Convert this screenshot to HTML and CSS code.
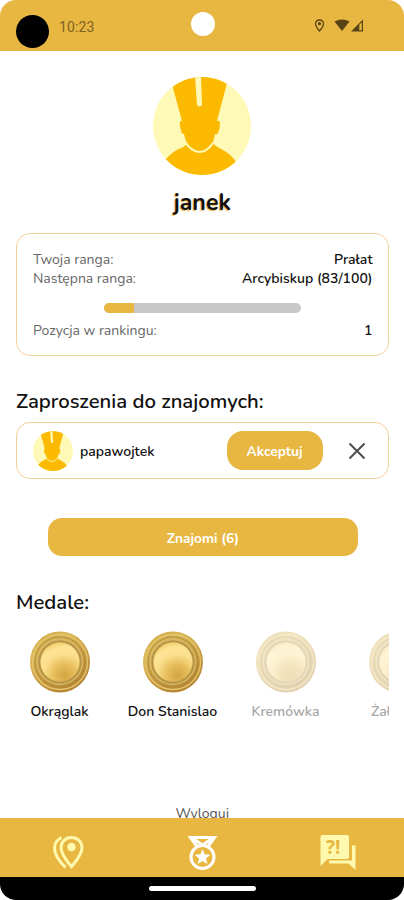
FILE: index.html
```html
<!DOCTYPE html>
<html lang="pl">
<head>
<meta charset="utf-8">
<title>Profil</title>
<link rel="stylesheet" href="styles.css">
</head>
<body>
<svg width="0" height="0" class="defs" aria-hidden="true">
  <defs>
    <clipPath id="round"><circle cx="49" cy="49" r="49"/></clipPath>
    <linearGradient id="rim" x1="0" y1="0" x2=".6" y2="1">
      <stop offset="0" stop-color="#c79d38"/><stop offset=".3" stop-color="#dcb958"/><stop offset=".6" stop-color="#cda143"/><stop offset="1" stop-color="#b48430"/>
    </linearGradient>
    <radialGradient id="face" cx=".62" cy=".84" r=".9">
      <stop offset="0" stop-color="#d3a442"/><stop offset=".3" stop-color="#e6bd5a"/><stop offset=".6" stop-color="#fbdf8c"/><stop offset=".8" stop-color="#fde495"/><stop offset="1" stop-color="#f0c75c"/>
    </radialGradient>
    <symbol id="avatar" viewBox="0 0 98 98">
      <g clip-path="url(#round)">
        <rect width="98" height="98" fill="#fff9b8"/>
        <path fill="#fbba00" d="M18 0H75L73 10L64 44Q67 43 67 46Q67 52 65 56Q64 58 62 57Q61 63 59.500 66Q62 69 68 72Q77 76 84 86L98 98H0L13 82Q20 74 28 71Q33 69 34 66Q32 62 31 57Q28 57 28 53Q26 47 27 45Q28 43 29 44L20 11Z"/>
        <path fill="#fff9b8" d="M42 0H48L49 28Q46 31 44 28Z"/>
        <path fill="none" stroke="#fff9b8" stroke-width="2.2" d="M33 66Q38 74 46 75Q54 75 60 66"/>
      </g>
    </symbol>
    <symbol id="medal" viewBox="0 0 60 62">
      <ellipse cx="30" cy="31" rx="30" ry="30.500" fill="url(#rim)"/>
      <circle cx="30" cy="31" r="27.500" fill="none" stroke="#e3c571" stroke-width="1.300"/>
      <circle cx="30" cy="31" r="25" fill="none" stroke="#b38a38" stroke-width="1"/>
      <circle cx="30" cy="31" r="22.500" fill="#c49f4b" stroke="#d6b966" stroke-width="1.300"/>
      <circle cx="30" cy="31" r="20.700" fill="none" stroke="#a98640" stroke-width="1.200" stroke-dasharray="1 1"/>
      <circle cx="30" cy="31" r="19.500" fill="url(#face)"/>
    </symbol>
  </defs>
</svg>
<div class="phone">
  <header class="status">
    <span class="recorder"></span>
    <span class="clock">10:23</span>
    <span class="camera"></span>
    <svg class="status-icons" width="50" height="16" viewBox="0 0 50 16">
      <path d="M5.500 2C3.200 2 1.500 3.600 1.500 5.700C1.500 8.300 5.500 13 5.500 13S9.500 8.300 9.500 5.700C9.500 3.600 7.800 2 5.500 2Z" fill="none" stroke="#584316" stroke-width="1.300"/>
      <circle cx="5.500" cy="5.700" r="1.600" fill="#584316"/>
      <path d="M20.500 3.500Q28-.500 35.500 3.500L28 13Z" fill="#584316"/>
      <path d="M37 13.500L49 1.500V13.500Z" fill="#584316"/><path d="M45.300 6.800L47.800 4.300V12.300H45.300Z" fill="#e8b742"/>
    </svg>
  </header>
  <main>
    <section class="profile">
      <svg class="portrait"><use href="#avatar"/></svg>
      <h1>janek</h1>
    </section>
    <section class="card rank">
      <div class="row"><span>Twoja ranga:</span><b>Prałat</b></div>
      <div class="row"><span>Następna ranga:</span><b>Arcybiskup (83/100)</b></div>
      <div class="progress"><i></i></div>
      <div class="row place"><span>Pozycja w rankingu:</span><b>1</b></div>
    </section>
    <h2 class="invites-title">Zaproszenia do znajomych:</h2>
    <section class="card invite">
      <svg class="mini"><use href="#avatar"/></svg>
      <span class="nick">papawojtek</span>
      <button class="accept">Akceptuj</button>
      <svg class="close" width="18" height="18" viewBox="0 0 18 18"><path d="M1.500 1.500L16.500 16.500M16.500 1.500L1.500 16.500" stroke="#4d4d4d" stroke-width="2" fill="none"/></svg>
    </section>
    <button class="friends">Znajomi (6)</button>
    <h2 class="medals-title">Medale:</h2>
    <section class="medals">
      <div class="medal"><svg><use href="#medal"/></svg><span>Okrąglak</span></div>
      <div class="medal"><svg><use href="#medal"/></svg><span>Don Stanislao</span></div>
      <div class="medal locked"><svg><use href="#medal"/></svg><span>Kremówka</span></div>
      <div class="medal locked"><svg><use href="#medal"/></svg><span>Żałobnik</span></div>
    </section>
    <a class="logout">Wyloguj</a>
  </main>
  <nav>
    <svg width="32" height="36" viewBox="0 0 32 36" fill="none" stroke="#fff9ae" stroke-width="3">
      <path d="M19.500 2.500C13.200 2.500 9 7 9 12.800C9 20 19.500 31.500 19.500 31.500S30 20 30 12.800C30 7 25.800 2.500 19.500 2.500Z"/>
      <path d="M9.500 2.500C4.500 5 2.500 8.500 2.500 13C2.500 19 7 26 13.500 32.500"/>
      <circle cx="19.500" cy="12" r="4.300" fill="#fff9ae" stroke="none"/>
    </svg>
    <svg width="32" height="36" viewBox="0 0 32 36" fill="none" stroke="#fff" stroke-width="3">
      <path d="M11 11.500L4.500 2.500H28.500L22 11.500M6 3L16.500 10L27 3"/>
      <circle cx="16.500" cy="22" r="11.500"/>
      <path fill="#fff" stroke="none" d="M16.500 14L18.600 19.200L24.300 19.700L20 23.400L21.300 28.900L16.500 26L11.700 28.900L13 23.400L8.700 19.700L14.400 19.200Z"/>
    </svg>
    <svg width="36" height="36" viewBox="0 0 36 36">
      <path fill="#fff9ae" d="M2.500 0H27Q29 0 29 2V22Q29 24 27 24H7.500L.5 31V2Q.5 0 2.500 0ZM32 10.500H35.500V35L28.500 28.500H9V25.500H32Z"/>
      <text x="6" y="18.500" class="quiz">?!</text>
    </svg>
  </nav>
  <footer><span></span></footer>
</div>
</body>
</html>
```
FILE: styles.css
```css
* { box-sizing: border-box; }
body { margin: 0; background: #fff; font-family: "Nunito", "Open Sans", "Noto Sans", sans-serif; color: #111; }
.defs { position: absolute; }
.phone { width: 404px; height: 900px; display: flex; flex-direction: column; overflow: hidden; border-radius: 16px; background: #fff; }
.status { position: relative; flex: none; height: 51px; background: #e8b742; display: flex; align-items: flex-start; padding: 15px 40px 0 16px; }
.recorder { width: 33px; height: 33px; border-radius: 50%; background: #000; }
.clock { margin: 3px 0 0 10px; font: 14px/18px Roboto, sans-serif; color: #80621f; letter-spacing: .1px; }
.camera { position: absolute; left: 191px; top: 12px; width: 24px; height: 24px; border-radius: 50%; background: #fff; }
.status-icons { margin: 3px 0 0 auto; }
main { flex: 1; min-height: 0; overflow: hidden; padding: 26px 15.5px 0 16px; display: flex; flex-direction: column; }
main > * { flex: none; }
.profile { display: flex; flex-direction: column; align-items: center; height: 156px; }
.portrait { width: 98px; height: 98px; }
h1 { margin: 13px 0 0; font-size: 23.2px; line-height: 30px; font-weight: 700; text-shadow: -1px 1px 1px #e8b742; }
.card { border: 1.5px solid #f3cf98; border-radius: 14px; }
.rank { height: 123px; padding: 16px 15px 0 16px; }
.row { display: flex; justify-content: space-between; height: 19px; font-size: 14px; line-height: 19px; color: #666; }
.row b { color: #111; font-weight: 600; }
.progress { width: 197px; height: 10px; margin: 15px auto 0 71px; border-radius: 5px; background: #c8c8c8; overflow: hidden; }
.progress i { display: block; width: 30px; height: 100%; background: #e8b742; }
.place { margin-top: 8px; }
h2 { margin: 0; font-size: 20.3px; line-height: 26px; font-weight: 600; }
.invites-title { margin-top: 32px; }
.invite { height: 57px; margin-top: 8px; padding: 0 22px 0 16px; display: flex; align-items: center; }
.mini { width: 40px; height: 40px; }
.nick { margin-left: 7px; padding-top: 1px; font-size: 14px; font-weight: 600; }
button { border: 0; padding: 0; background: #e8b742; color: #fff; font: 700 13.7px "Nunito", "Open Sans", sans-serif; }
.accept { width: 96px; height: 39px; border-radius: 16px; margin-left: auto; padding-top: 1px; }
.close { margin-left: 25px; }
.friends { width: 310px; height: 38px; margin: 39px 0 0 32px; border-radius: 14px; padding-top: 2px; }
.medals-title { margin-top: 33px; }
.medals { display: flex; margin-top: 16px; overflow: hidden; height: 96px; margin-left: -13px; }
.medal { flex: none; width: 113px; display: flex; flex-direction: column; align-items: center; }
.medal svg { width: 60px; height: 62px; }
.medal span { margin-top: 9px; font-size: 14px; line-height: 20px; font-weight: 600; white-space: nowrap; }
.locked { opacity: .38; }
.logout { margin-top: 77px; align-self: center; font-size: 14px; line-height: 20px; color: #555; }
nav { flex: none; height: 59px; background: #e8b742; display: flex; justify-content: space-between; padding: 17px 48px 0 52px; }
.quiz { font: 700 19px "Open Sans", sans-serif; fill: #e8b742; }
footer { flex: none; height: 23px; background: #000; display: flex; justify-content: center; padding-top: 9px; }
footer span { width: 107px; height: 5px; border-radius: 3px; background: #fff; }
```
